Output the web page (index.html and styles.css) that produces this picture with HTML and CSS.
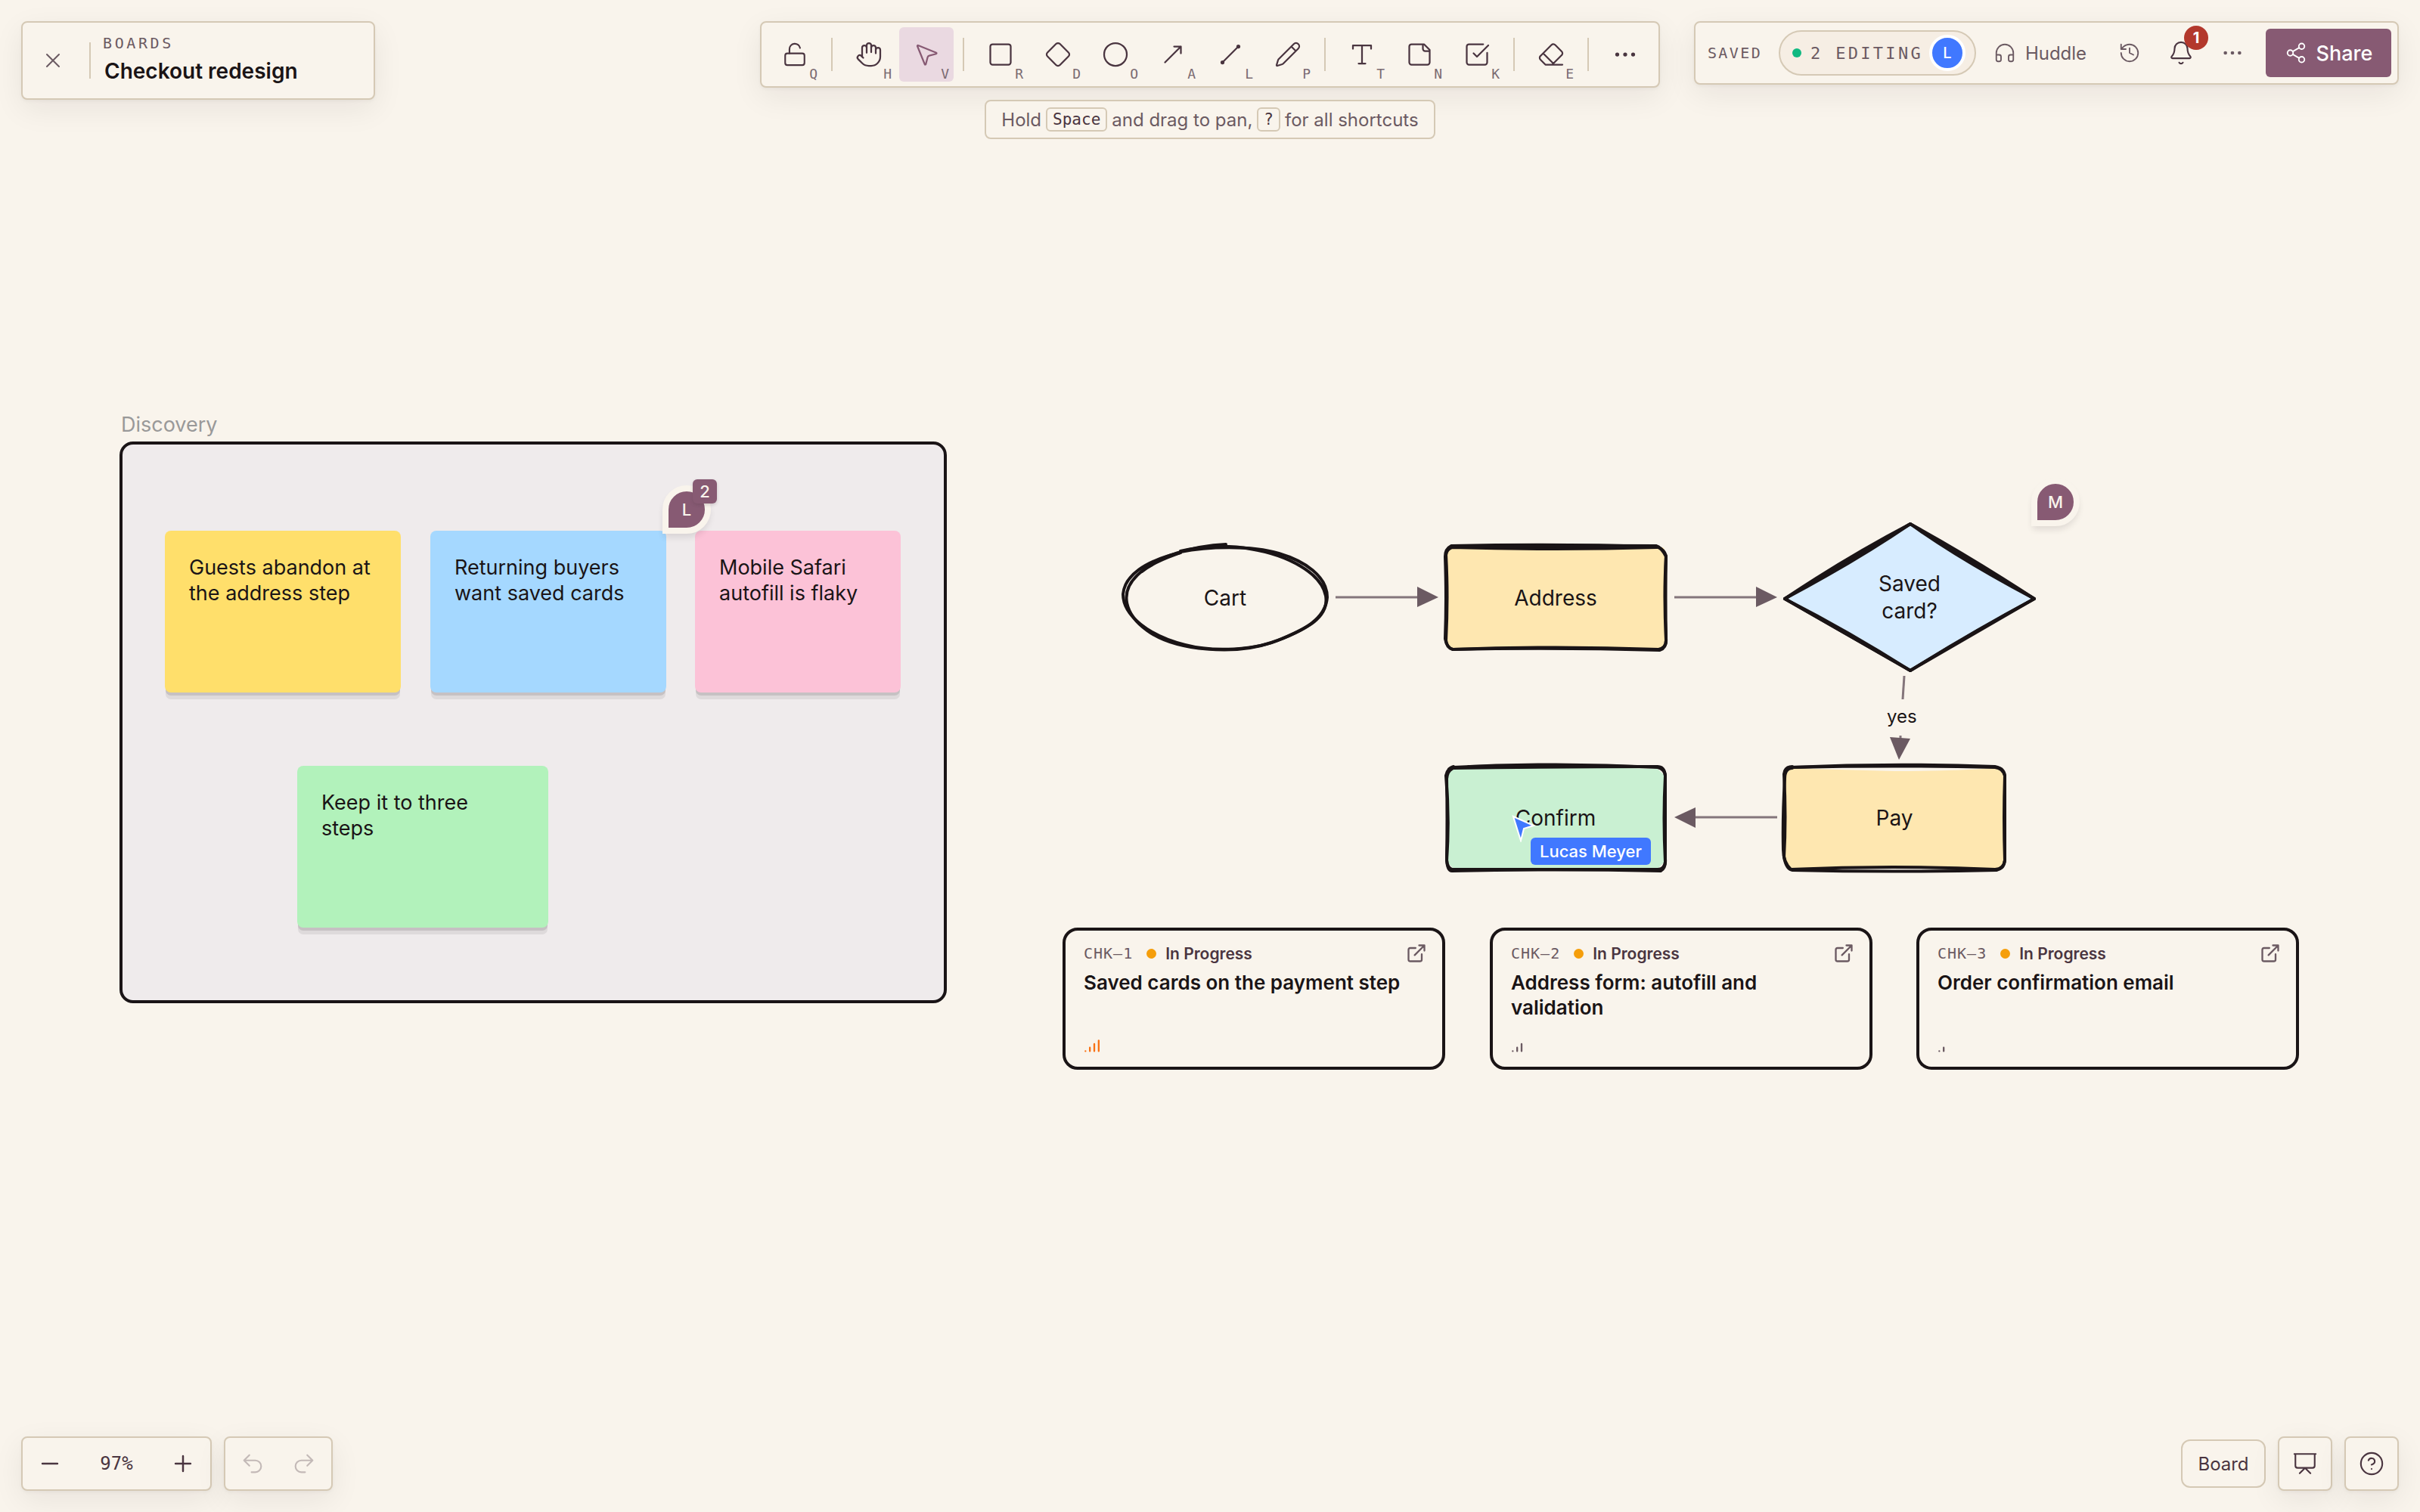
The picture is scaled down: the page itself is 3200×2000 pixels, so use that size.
FILE: index.html
```
<!DOCTYPE html>
<html lang="en">
<head>
    <meta charset="UTF-8" />
    <meta name="viewport" content="width=device-width, initial-scale=1.0"/>
    <title>Checkout redesign</title>
    <link rel="stylesheet" href="styles.css">
</head>
<body>

    <main class="canvas">
        <section class="frame">
            <h2 class="frame-title">Discovery</h2>
        </section>
        <div class="sticky yellow">Guests abandon at<br>the address step</div>
        <div class="sticky blue">Returning buyers<br>want saved cards</div>
        <div class="sticky pink">Mobile Safari<br>autofill is flaky</div>
        <div class="sticky green">Keep it to three<br>steps</div>

        <!-- flow -->
        <svg class="links" viewBox="0 0 1000 400">
            <g class="link-line">
                <path d="M326 170H435"/>
                <path d="M774 170H882"/>
                <path d="M910 461H802"/>
                <path d="M1078 274L1076 305"/>
                <path d="M1073 353V359"/>
            </g>
            <g class="link-head">
                <path d="M434 156L462 170L434 183Z"/>
                <path d="M882 156L910 170L882 183Z"/>
                <path d="M802 448L774 461L802 475Z"/>
                <path d="M1059 355L1086 357L1071 385Z"/>
            </g>
        </svg>
        <span class="link-label">yes</span>

        <div class="node cart">
            <svg class="sketch" viewBox="0 0 270 138">
                <path d="M76 7C104 0 140 -1 168 4C218 12 262 36 268 66C273 96 240 110 210 123C176 138 120 141 82 131C34 119 0 92 0 64C2 40 28 20 76 9"/>
                <path d="M136 -2C92 0 46 14 22 36C-8 62 4 92 32 112C70 140 150 144 196 128C240 113 268 96 270 68C270 40 240 20 206 10C170 -1 110 1 76 8"/>
                <path d="M25 34C42 20 66 13 76 9"/>
            </svg>
            <span>Cart</span>
        </div>
        <div class="node address">
            <svg class="sketch" viewBox="0 0 290 136">
                <path class="fill-amber" d="M10 2H286Q290 6 290 14V128Q286 134 278 135Q140 138 8 134Q2 130 1 124V12Q2 4 10 2Z"/>
                <path d="M9 0Q145 -3 278 1Q288 5 290 13Q287 66 290 122Q291 134 280 136Q145 131 10 136Q2 134 1 124Q4 66 1 12Q2 4 9 2Q145 6 278 2"/>
                <path d="M8 0Q0 4 0 14Q2 70 0 122Q2 134 10 136Q145 133 282 137Q290 134 290 124Q289 70 290 14Q284 2 277 0Q145 -1 10 1"/>
                <path d="M60 2Q145 -2 240 2"/>
            </svg>
            <span>Address</span>
        </div>
        <div class="node confirm">
            <svg class="sketch" viewBox="0 0 290 140">
                <path class="fill-green" d="M9 5Q145 1 280 5L289 14V128L280 137H10L1 128V14Z"/>
                <path d="M10 3Q145 -4 280 3Q289 5 290 14Q287 70 290 128Q289 138 280 138H8Q2 136 1 126Q5 70 0 14Q2 4 10 2"/>
                <path d="M8 5Q2 8 1 18Q2 70 1 122Q1 140 8 140Q145 137 284 140Q291 136 290 124V14Q289 2 280 2Q145 2 10 4"/>
                <path d="M30 2Q145 0 250 2"/>
            </svg>
            <span>Confirm</span>
        </div>
        <div class="node pay">
            <svg class="sketch" viewBox="0 0 294 140">
                <path class="fill-amber" d="M10 4Q70 6 147 8Q220 8 284 4L293 14V128L284 137H10L2 128V14Z"/>
                <path d="M10 3Q145 -3 280 2Q292 4 293 14Q291 70 293 126Q292 138 280 138Q145 132 10 138Q0 128 0 112Q-1 70 2 18Q2 4 12 4"/>
                <path d="M12 2Q2 2 1 12Q4 70 1 122Q4 138 12 139Q145 142 282 139Q292 136 293 126V14Q290 4 280 3Q145 0 12 3"/>
            </svg>
            <span>Pay</span>
        </div>
        <div class="node decision">
            <svg class="sketch" viewBox="0 0 330 194">
                <path class="fill-sky" d="M166 0L330 99L166 194L0 99Z"/>
                <path d="M166 0L330 99L166 194L0 99Z"/>
                <path d="M166 0Q230 46 330 99Q246 145 166 194Q86 143 0 99Q94 49 166 0"/>
                <path d="M166 0Q246 44 330 99Q246 144 166 194Q80 145 0 99Q82 44 166 0"/>
            </svg>
            <span>Saved<br>card?</span>
        </div>

        <!-- issue cards -->
        <article class="issue first">
            <header class="issue-head">
                <span class="issue-key">CHK–1</span>
                <span class="issue-state">In Progress</span>
                <a class="issue-open" href="#chk-1" aria-label="Open CHK-1">
                    <svg class="icon s28" viewBox="0 0 24 24"><path d="M15 3h6v6M10 14 21 3M18 13v6a2 2 0 0 1-2 2H5a2 2 0 0 1-2-2V8a2 2 0 0 1 2-2h6"/></svg>
                </a>
            </header>
            <h3 class="issue-title">Saved cards on the payment step</h3>
            <svg class="icon s28 priority high" viewBox="0 0 24 24"><path d="M2 20h.01M7 20v-4M12 20v-8M17 20V8"/></svg>
        </article>
        <article class="issue second">
            <header class="issue-head">
                <span class="issue-key">CHK–2</span>
                <span class="issue-state">In Progress</span>
                <a class="issue-open" href="#chk-2" aria-label="Open CHK-2">
                    <svg class="icon s28" viewBox="0 0 24 24"><path d="M15 3h6v6M10 14 21 3M18 13v6a2 2 0 0 1-2 2H5a2 2 0 0 1-2-2V8a2 2 0 0 1 2-2h6"/></svg>
                </a>
            </header>
            <h3 class="issue-title">Address form: autofill and<br>validation</h3>
            <svg class="icon s28 priority" viewBox="0 0 24 24"><path d="M2 20h.01M7 20v-4M12 20v-8"/></svg>
        </article>
        <article class="issue third">
            <header class="issue-head">
                <span class="issue-key">CHK–3</span>
                <span class="issue-state">In Progress</span>
                <a class="issue-open" href="#chk-3" aria-label="Open CHK-3">
                    <svg class="icon s28" viewBox="0 0 24 24"><path d="M15 3h6v6M10 14 21 3M18 13v6a2 2 0 0 1-2 2H5a2 2 0 0 1-2-2V8a2 2 0 0 1 2-2h6"/></svg>
                </a>
            </header>
            <h3 class="issue-title">Order confirmation email</h3>
            <svg class="icon s28 priority" viewBox="0 0 24 24"><path d="M2 20h.01M7 20v-4"/></svg>
        </article>

        <!-- comments and live cursor -->
        <button class="pin pin-l" type="button">L<span class="pin-count">2</span></button>
        <button class="pin pin-m" type="button">M</button>
        <div class="cursor">
            <svg class="cursor-arrow" viewBox="0 0 32 36"><path d="M2 2L29 14L16 18L12 34Z"/></svg>
            <span class="cursor-name">Lucas Meyer</span>
        </div>
    </main>

    <header class="topbar">
        <div class="panel title-panel">
            <button class="close" type="button" aria-label="Close board">
                <svg class="icon s32" viewBox="0 0 24 24"><path d="M18 6 6 18M6 6l12 12"/></svg>
            </button>
            <span class="title-divider"></span>
            <div class="title-text">
                <a class="crumb" href="#boards">BOARDS</a>
                <h1 class="board-name">Checkout redesign</h1>
            </div>
        </div>

        <div class="tools-wrap">
            <nav class="panel tools" aria-label="Tools">
                <button class="tool" type="button" aria-label="Lock">
                    <svg class="icon s34" viewBox="0 0 24 24"><rect x="3" y="11" width="18" height="11" rx="2"/><path d="M7 11V7a5 5 0 0 1 9.9-1"/></svg><kbd>Q</kbd>
                </button>
                <span class="divider"></span>
                <button class="tool" type="button" aria-label="Hand">
                    <svg class="icon" viewBox="0 0 24 24"><path d="M18 11V6a2 2 0 0 0-2-2a2 2 0 0 0-2 2"/><path d="M14 10V4a2 2 0 0 0-2-2a2 2 0 0 0-2 2v2"/><path d="M10 10.500V6a2 2 0 0 0-2-2a2 2 0 0 0-2 2v8"/><path d="M18 8a2 2 0 1 1 4 0v6a8 8 0 0 1-8 8h-2c-2.800 0-4.500-.86-5.990-2.340l-3.600-3.600a2 2 0 0 1 2.830-2.820L7 15"/></svg><kbd>H</kbd>
                </button>
                <button class="tool active" type="button" aria-label="Select">
                    <svg class="icon" viewBox="0 0 24 24"><path d="M4.037 4.688a.495.495 0 0 1 .651-.651l16 6.500a.5.5 0 0 1-.063.947l-6.124 1.580a2 2 0 0 0-1.438 1.435l-1.579 6.126a.5.5 0 0 1-.947.063z"/></svg><kbd>V</kbd>
                </button>
                <span class="divider"></span>
                <button class="tool" type="button" aria-label="Rectangle">
                    <svg class="icon" viewBox="0 0 24 24"><rect x="3" y="3" width="18" height="18" rx="2"/></svg><kbd>R</kbd>
                </button>
                <button class="tool" type="button" aria-label="Diamond">
                    <svg class="icon" viewBox="0 0 24 24"><path d="M2.700 10.300a2.410 2.410 0 0 0 0 3.410l7.590 7.590a2.410 2.410 0 0 0 3.410 0l7.590-7.590a2.410 2.410 0 0 0 0-3.410l-7.590-7.590a2.410 2.410 0 0 0-3.410 0Z"/></svg><kbd>D</kbd>
                </button>
                <button class="tool" type="button" aria-label="Ellipse">
                    <svg class="icon" viewBox="0 0 24 24"><circle cx="12" cy="12" r="10"/></svg><kbd>O</kbd>
                </button>
                <button class="tool" type="button" aria-label="Arrow">
                    <svg class="icon" viewBox="0 0 24 24"><path d="M13 5h6v6M19 5 5 19"/></svg><kbd>A</kbd>
                </button>
                <button class="tool" type="button" aria-label="Line">
                    <svg class="icon" viewBox="0 0 24 24"><path d="M5 19 19 5"/><circle class="dot" cx="5" cy="19" r="1"/><circle class="dot" cx="19" cy="5" r="1"/></svg><kbd>L</kbd>
                </button>
                <button class="tool" type="button" aria-label="Pencil">
                    <svg class="icon" viewBox="0 0 24 24"><path d="M21.174 6.812a1 1 0 0 0-3.986-3.987L3.842 16.174a2 2 0 0 0-.5.83l-1.321 4.352a.5.5 0 0 0 .623.622l4.353-1.320a2 2 0 0 0 .83-.497zM15 5l4 4"/></svg><kbd>P</kbd>
                </button>
                <span class="divider"></span>
                <button class="tool" type="button" aria-label="Text">
                    <svg class="icon" viewBox="0 0 24 24"><path d="M4 7V4h16v3M9 20h6M12 4v16"/></svg><kbd>T</kbd>
                </button>
                <button class="tool" type="button" aria-label="Sticky note">
                    <svg class="icon" viewBox="0 0 24 24"><path d="M16 3H5a2 2 0 0 0-2 2v14a2 2 0 0 0 2 2h14a2 2 0 0 0 2-2V8ZM15 3v4a2 2 0 0 0 2 2h4"/></svg><kbd>N</kbd>
                </button>
                <button class="tool" type="button" aria-label="Task">
                    <svg class="icon" viewBox="0 0 24 24"><path d="M21 10.500V19a2 2 0 0 1-2 2H5a2 2 0 0 1-2-2V5a2 2 0 0 1 2-2h12.500M9 11l3 3L22 4"/></svg><kbd>K</kbd>
                </button>
                <span class="divider"></span>
                <button class="tool" type="button" aria-label="Eraser">
                    <svg class="icon" viewBox="0 0 24 24"><path d="m7 21-4.300-4.300c-1-1-1-2.500 0-3.400l9.600-9.600c1-1 2.500-1 3.400 0l5.600 5.600c1 1 1 2.500 0 3.400L13 21M22 21H7M5 11l9 9"/></svg><kbd>E</kbd>
                </button>
                <span class="divider"></span>
                <button class="tool" type="button" aria-label="More tools">
                    <svg class="icon" viewBox="0 0 24 24"><g class="dot"><circle cx="5" cy="12" r="1"/><circle cx="12" cy="12" r="1"/><circle cx="19" cy="12" r="1"/></g></svg>
                </button>
            </nav>
            <p class="hint">Hold <kbd>Space</kbd> and drag to pan, <kbd>?</kbd> for all shortcuts</p>
        </div>

        <div class="panel actions">
            <span class="saved">SAVED</span>
            <button class="editing" type="button"><i class="online"></i>2 EDITING<span class="avatar">L</span></button>
            <button class="ghost huddle" type="button">
                <svg class="icon s30" viewBox="0 0 24 24"><path d="M3 14h3a2 2 0 0 1 2 2v3a2 2 0 0 1-2 2H5a2 2 0 0 1-2-2v-7a9 9 0 0 1 18 0v7a2 2 0 0 1-2 2h-1a2 2 0 0 1-2-2v-3a2 2 0 0 1 2-2h3"/></svg>Huddle
            </button>
            <button class="ghost" type="button" aria-label="History">
                <svg class="icon s30" viewBox="0 0 24 24"><path d="M3 12a9 9 0 1 0 9-9 9.750 9.750 0 0 0-6.740 2.740L3 8M3 3v5h5M12 7v5l4 2"/></svg>
            </button>
            <button class="ghost bell" type="button" aria-label="Notifications">
                <svg class="icon s34" viewBox="0 0 24 24"><path d="M10.268 21a2 2 0 0 0 3.464 0M3.262 15.326A1 1 0 0 0 4 17h16a1 1 0 0 0 .74-1.673C19.410 13.956 18 12.499 18 8A6 6 0 0 0 6 8c0 4.499-1.411 5.956-2.738 7.326"/></svg>
                <span class="bell-count">1</span>
            </button>
            <button class="ghost" type="button" aria-label="More">
                <svg class="icon s32" viewBox="0 0 24 24"><g class="dot"><circle cx="5" cy="12" r="1"/><circle cx="12" cy="12" r="1"/><circle cx="19" cy="12" r="1"/></g></svg>
            </button>
            <button class="share" type="button">
                <svg class="icon s30" viewBox="0 0 24 24"><circle cx="18" cy="5" r="3"/><circle cx="6" cy="12" r="3"/><circle cx="18" cy="19" r="3"/><path d="m8.590 13.510 6.830 3.980M15.410 6.510l-6.820 3.980"/></svg>Share
            </button>
        </div>
    </header>

    <footer class="bottombar">
        <div class="panel zoom">
            <button class="square" type="button" aria-label="Zoom out"><svg class="icon s34 bold" viewBox="0 0 24 24"><path d="M5 12h14"/></svg></button>
            <button class="zoom-value" type="button">97%</button>
            <button class="square" type="button" aria-label="Zoom in"><svg class="icon s34 bold" viewBox="0 0 24 24"><path d="M5 12h14M12 5v14"/></svg></button>
        </div>
        <div class="panel zoom">
            <button class="square" type="button" aria-label="Undo" disabled><svg class="icon s34" viewBox="0 0 24 24"><path d="M9 14 4 9l5-5M4 9h10.500a5.500 5.500 0 0 1 0 11H11"/></svg></button>
            <button class="square" type="button" aria-label="Redo" disabled><svg class="icon s34" viewBox="0 0 24 24"><path d="m15 14 5-5-5-5M20 9H9.500a5.500 5.500 0 0 0 0 11H13"/></svg></button>
        </div>
        <button class="mode" type="button">Board</button>
        <button class="panel corner" type="button" aria-label="Present"><svg class="icon s34" viewBox="0 0 24 24"><path d="M2 3h20M21 3v11a2 2 0 0 1-2 2H5a2 2 0 0 1-2-2V3M7 21l5-5 5 5"/></svg></button>
        <button class="panel corner" type="button" aria-label="Help"><svg class="icon s34" viewBox="0 0 24 24"><circle cx="12" cy="12" r="10"/><path d="M9.090 9a3 3 0 0 1 5.830 1c0 2-3 3-3 3M12 17h.01"/></svg></button>
    </footer>

</body>
</html>
```
FILE: styles.css
```
:root {
    --paper: #f9f4ec;
    --line: #d5c9b5;
    --ink: #1a1416;
    --text: #4a3540;
    --muted: #6b5a62;
    --plum: #875a73;
    --live: #4078ff;
    --mono: "DejaVu Sans Mono", monospace;
    --shadow: 0 2px 4px rgba(26,20,22,0.04), 0 12px 40px rgba(26,20,22,0.07);
}
* { box-sizing: border-box; }
body {
    margin: 0;
    min-height: 100vh;
    display: flex;
    flex-direction: column;
    justify-content: space-between;
    background: var(--paper);
    color: var(--ink);
    font-family: Inter, "Liberation Sans", sans-serif;
    font-size: 24px;
    overflow: hidden;
}
button {
    margin: 0;
    padding: 0;
    border: 0;
    background: none;
    color: inherit;
    font: inherit;
    cursor: pointer;
}
h1, h2, h3, p { margin: 0; }
a { color: inherit; text-decoration: none; }

.icon {
    display: block;
    flex: none;
    width: 36px;
    height: 36px;
    fill: none;
    stroke: currentColor;
    stroke-width: 1.5;
    stroke-linecap: round;
    stroke-linejoin: round;
}
.icon.s28 { width: 28px; height: 28px; stroke-width: 2; }
.icon.s30 { width: 30px; height: 30px; }
.icon.s32 { width: 32px; height: 32px; }
.icon.s34 { width: 34px; height: 34px; }
.icon.bold { stroke-width: 1.75; }
.icon .dot { fill: currentColor; }

.panel {
    display: flex;
    align-items: center;
    background: var(--paper);
    border: 2px solid var(--line);
    border-radius: 8px;
    box-shadow: var(--shadow);
}

/* top bar */
.topbar {
    position: relative;
    display: grid;
    grid-template-columns: 1fr auto 1fr;
    align-items: start;
    padding: 28px;
}
.title-panel {
    width: 468px;
    height: 104px;
    padding-left: 8px;
}
.close {
    width: 64px;
    height: 64px;
    display: flex;
    align-items: center;
    justify-content: center;
    color: var(--muted);
}
.title-divider {
    width: 2px;
    height: 48px;
    margin: 0 16px;
    background: var(--line);
}
.title-text {
    padding-bottom: 8px;
    line-height: 36px;
}
.crumb {
    display: block;
    font-family: var(--mono);
    font-size: 20px;
    letter-spacing: 0.18em;
    color: var(--muted);
}
.board-name {
    font-size: 28px;
    line-height: 38px;
    font-weight: 600;
    padding-left: 2px;
}

.tools-wrap {
    display: flex;
    flex-direction: column;
    align-items: center;
    gap: 16px;
}
.tools {
    gap: 4px;
    padding: 6px 8px;
}
.divider {
    width: 2px;
    height: 44px;
    margin: 0 8px;
    background: var(--line);
}
.tool {
    position: relative;
    width: 72px;
    height: 72px;
    display: flex;
    align-items: center;
    justify-content: center;
    border-radius: 6px;
    color: var(--text);
}
.tool.active {
    background: #ead9e1;
    color: var(--plum);
}
.tool kbd {
    position: absolute;
    right: 6px;
    bottom: 0;
    font-family: var(--mono);
    font-size: 18px;
    line-height: 20px;
    color: #7b6b72;
}
.hint {
    height: 52px;
    display: flex;
    align-items: center;
    gap: 6px;
    padding: 0 20px;
    background: var(--paper);
    border: 2px solid var(--line);
    border-radius: 8px;
    color: var(--muted);
}
.hint kbd {
    height: 32px;
    padding: 0 7px;
    border: 2px solid var(--line);
    border-radius: 6px;
    font-family: var(--mono);
    font-size: 21px;
    line-height: 28px;
    color: var(--text);
}

.actions {
    justify-self: end;
    padding: 8px;
    color: var(--muted);
}
.saved {
    margin: 0 22px 0 8px;
    font-family: var(--mono);
    font-size: 20px;
    letter-spacing: 0.12em;
}
.editing {
    height: 60px;
    display: flex;
    align-items: center;
    padding: 0 12px 0 16px;
    border: 2px solid var(--line);
    border-radius: 30px;
    background: #f6eee4;
    font-family: var(--mono);
    font-size: 22px;
    letter-spacing: 0.15em;
}
.online {
    width: 12px;
    height: 12px;
    margin-right: 12px;
    border-radius: 50%;
    background: #10b981;
}
.avatar {
    width: 48px;
    height: 48px;
    margin-left: 8px;
    border: 4px solid #fff;
    border-radius: 50%;
    background: var(--live);
    color: #fff;
    font: 500 20px/40px Inter, sans-serif;
    letter-spacing: 0;
    text-align: center;
}
.ghost {
    position: relative;
    width: 68px;
    height: 64px;
    display: flex;
    align-items: center;
    justify-content: center;
    gap: 12px;
}
.ghost.huddle { width: 169px; }
.bell { color: var(--text); }
.bell-count {
    position: absolute;
    top: -4px;
    right: -2px;
    width: 32px;
    height: 32px;
    border-radius: 50%;
    background: #b3382c;
    color: #fff;
    font-size: 20px;
    line-height: 32px;
    font-weight: 700;
}
.share {
    width: 166px;
    height: 64px;
    margin-left: 10px;
    display: flex;
    align-items: center;
    justify-content: center;
    gap: 12px;
    border-radius: 6px;
    background: var(--plum);
    color: #fff;
    font-size: 27px;
    font-weight: 500;
}

/* bottom bar */
.bottombar {
    position: relative;
    display: flex;
    align-items: center;
    gap: 16px;
    padding: 28px;
    color: var(--text);
}
.zoom {
    height: 72px;
    gap: 4px;
    padding: 0 4px;
}
.square {
    width: 64px;
    height: 64px;
    display: flex;
    align-items: center;
    justify-content: center;
}
.square:disabled { opacity: 0.3; color: var(--text); }
.zoom-value {
    width: 104px;
    font-family: var(--mono);
    font-size: 24px;
}
.mode {
    width: 112px;
    height: 64px;
    margin-left: auto;
    border: 2px solid var(--line);
    border-radius: 12px;
}
.corner {
    width: 72px;
    height: 72px;
    justify-content: center;
    border: 2px solid var(--line);
    background: var(--paper);
}

/* canvas */
.canvas {
    position: absolute;
    inset: 0;
    overflow: hidden;
}
.frame {
    position: absolute;
    left: 158px;
    top: 584px;
    width: 1094px;
    height: 743px;
    border: 4px solid var(--ink);
    border-radius: 18px;
    background: #efebec;
}
.frame-title {
    position: absolute;
    left: -2px;
    top: -42px;
    font-size: 27px;
    line-height: 32px;
    font-weight: 400;
    color: #999;
}
.sticky {
    position: absolute;
    width: 312px;
    height: 214px;
    padding: 32px;
    border-radius: 8px;
    box-shadow: 0 5px 0 -1px rgba(26,20,22,0.12), 0 10px 0 -1px rgba(26,20,22,0.08);
    font-size: 27px;
    line-height: 34px;
    white-space: nowrap;
}
.yellow { left: 218px; top: 702px; background: #ffdf6b; }
.blue { left: 569px; top: 702px; background: #a5d8ff; }
.pink { left: 919px; top: 702px; width: 272px; background: #fcc2d7; }
.green { left: 393px; top: 1013px; width: 332px; background: #b2f2bb; }

.links {
    position: absolute;
    left: 1440px;
    top: 620px;
    width: 1000px;
    height: 400px;
    overflow: visible;
}
.link-line { fill: none; stroke: #84757b; stroke-width: 3; }
.link-head { fill: var(--muted); }
.link-label {
    position: absolute;
    left: 2495px;
    top: 932px;
    font-size: 24px;
    line-height: 32px;
}
.node {
    position: absolute;
    display: flex;
    align-items: center;
    justify-content: center;
    font-size: 28px;
    line-height: 36px;
    text-align: center;
}
.node span { position: relative; }
.sketch {
    position: absolute;
    inset: 0;
    width: 100%;
    height: 100%;
    overflow: visible;
    fill: none;
    stroke: var(--ink);
    stroke-width: 4;
    stroke-linecap: round;
    stroke-linejoin: round;
}
.sketch .fill-amber { fill: #fee7b0; stroke: none; }
.sketch .fill-green { fill: #c9f0d2; stroke: none; }
.sketch .fill-sky { fill: #d7ecff; stroke: none; }
.cart { left: 1484px; top: 722px; width: 272px; height: 138px; }
.address { left: 1911px; top: 722px; width: 292px; height: 137px; }
.confirm { left: 1911px; top: 1012px; width: 292px; height: 140px; }
.pay { left: 2358px; top: 1012px; width: 294px; height: 140px; }
.decision { left: 2360px; top: 693px; width: 330px; height: 194px; }

.issue {
    position: absolute;
    top: 1227px;
    width: 506px;
    height: 188px;
    display: flex;
    flex-direction: column;
    padding: 16px 20px 16px 24px;
    border: 4px solid var(--ink);
    border-radius: 20px;
}
.first { left: 1405px; }
.second { left: 1970px; }
.third { left: 2534px; }
.issue-head {
    display: flex;
    align-items: center;
    height: 28px;
}
.issue-key {
    font-family: var(--mono);
    font-size: 20px;
    letter-spacing: 0.05em;
    color: var(--muted);
}
.issue-state {
    display: flex;
    align-items: center;
    gap: 12px;
    margin-left: 18px;
    font-size: 21px;
    font-weight: 600;
    color: var(--text);
}
.issue-state::before {
    content: "";
    width: 13px;
    height: 13px;
    border-radius: 50%;
    background: #f59e0b;
}
.issue-open { margin-left: auto; color: var(--muted); }
.issue-title {
    margin-top: 8px;
    font-size: 26px;
    line-height: 33px;
    font-weight: 600;
}
.priority { margin-top: auto; color: var(--muted); }
.priority.high { color: #f97316; }

.pin {
    position: absolute;
    width: 64px;
    height: 64px;
    border: 8px solid var(--paper);
    border-radius: 50% 50% 50% 0;
    background: var(--plum);
    box-shadow: 0 6px 10px -2px rgba(26,20,22,0.12);
    color: var(--paper);
    font-size: 22px;
    font-weight: 500;
}
.pin-l { left: 876px; top: 642px; }
.pin-m { left: 2686px; top: 632px; }
.pin-count {
    position: absolute;
    top: -16px;
    right: -16px;
    width: 32px;
    height: 32px;
    border-radius: 6px;
    background: var(--plum);
    box-shadow: 0 2px 4px rgba(74,53,64,0.2);
    line-height: 32px;
}
.cursor { position: absolute; left: 1999px; top: 1078px; }
.cursor-arrow {
    display: block;
    width: 32px;
    height: 36px;
    fill: var(--live);
    stroke: #fff;
    stroke-width: 2;
}
.cursor-name {
    position: absolute;
    left: 25px;
    top: 30px;
    padding: 0 12px;
    border-radius: 6px;
    background: var(--live);
    color: #fff;
    font-size: 22px;
    line-height: 36px;
    font-weight: 500;
    white-space: nowrap;
}
```
